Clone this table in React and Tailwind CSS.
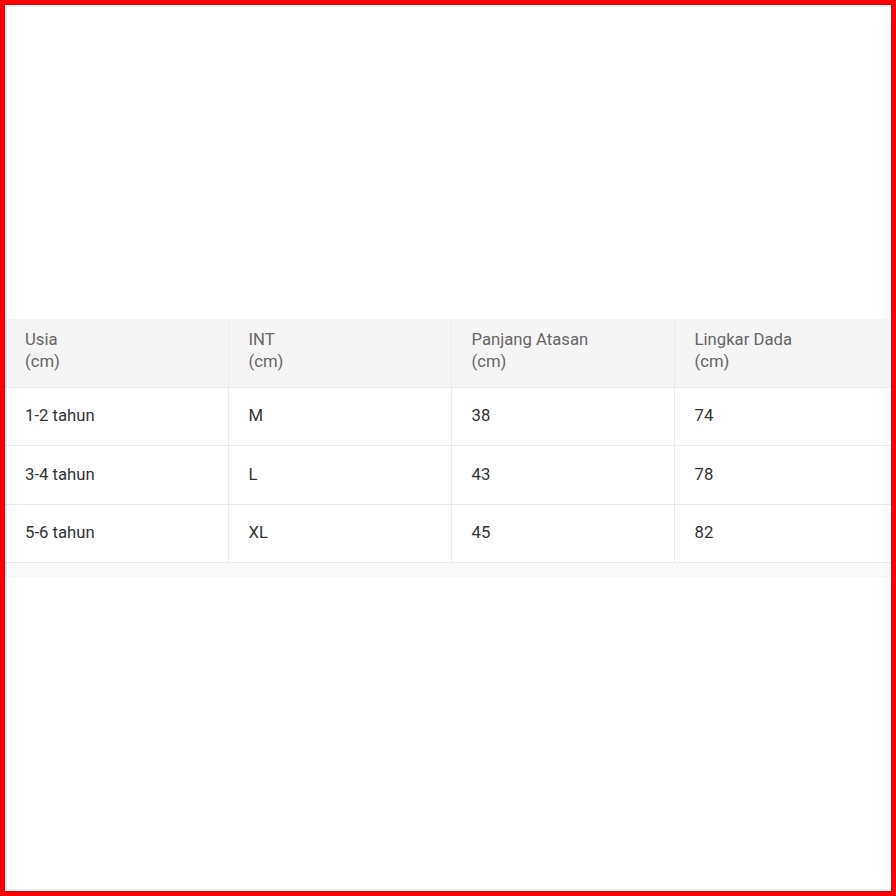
import React from 'react';

const rows = [
  { usia: '1-2 tahun', int: 'M', panjang: '38', dada: '74' },
  { usia: '3-4 tahun', int: 'L', panjang: '43', dada: '78' },
  { usia: '5-6 tahun', int: 'XL', panjang: '45', dada: '82' },
];

const headers = ['Usia', 'INT', 'Panjang Atasan', 'Lingkar Dada'];

export default function App() {
  return (
    <div className="h-[896px] w-[896px] border-[5px] border-[#ff0000] bg-white overflow-hidden flex flex-col justify-center" style={{ fontFamily: 'Roboto, "Noto Sans", sans-serif' }}>
      <div className="w-full overflow-hidden">
        <table className="w-[892px] border-collapse text-[16.7px]">
          <thead>
            <tr className="bg-[#f5f5f5] border-b border-[#ebebeb] h-[68px]">
              {headers.map((h, i) => (
                <th
                  key={h}
                  className={`w-[223px] text-left font-normal text-[#666] leading-[22px] pl-5 pr-3 pt-[10px] pb-[12px] align-top ${i > 0 ? 'border-l border-[#ebebeb]' : ''}`}
                >
                  {h}
                  <br />
                  (cm)
                </th>
              ))}
            </tr>
          </thead>
          <tbody>
            {rows.map((r, i) => (
              <tr key={r.usia} className={`border-b border-[#ebebeb] ${i === 1 ? 'h-[59px]' : 'h-[58px]'}`}>
                <td className="pl-5 text-[#333] leading-[22px]">{r.usia}</td>
                <td className="pl-5 text-[#333] leading-[22px] border-l border-[#ebebeb]">{r.int}</td>
                <td className="pl-5 text-[#333] leading-[22px] border-l border-[#ebebeb]">{r.panjang}</td>
                <td className="pl-5 text-[#333] leading-[22px] border-l border-[#ebebeb]">{r.dada}</td>
              </tr>
            ))}
          </tbody>
        </table>
        <div className="h-[14px] bg-[#f9f9f9]" />
      </div>
    </div>
  );
}
